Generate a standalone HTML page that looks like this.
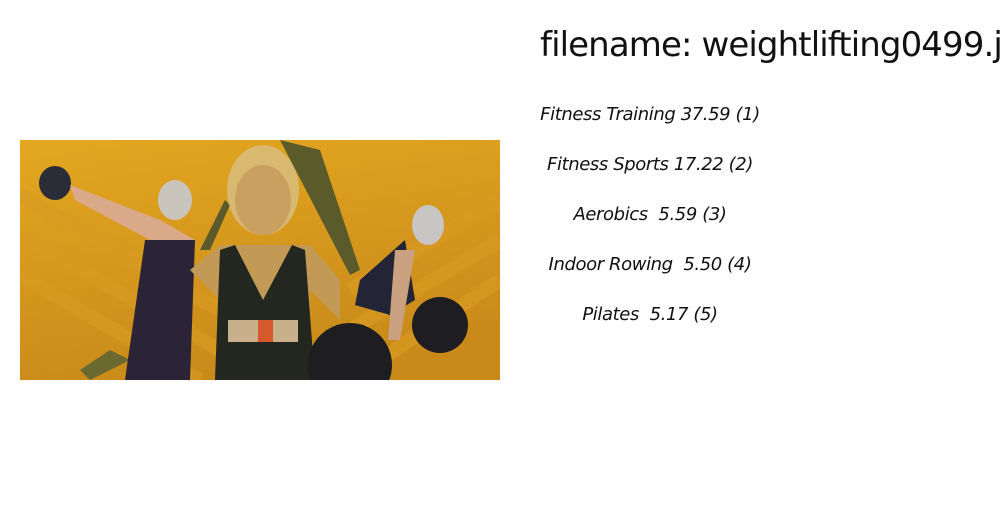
<!DOCTYPE html>
<html><head><meta charset="utf-8"><style>
html,body{margin:0;padding:0;background:#fff;width:1000px;height:520px;overflow:hidden;position:relative}
.t{position:absolute;left:540px;top:25px;width:460px;overflow:hidden;font:34px "DejaVu Sans","Liberation Sans",sans-serif;color:#111;white-space:nowrap;letter-spacing:-0.9px}
.l{position:absolute;width:240px;left:530px;text-align:center;font:italic 18px "DejaVu Sans","Liberation Sans",sans-serif;color:#111;white-space:nowrap;letter-spacing:-0.4px}
</style></head><body>
<svg style="position:absolute;left:20px;top:140px" width="480" height="240" viewBox="0 0 480 240">
<defs><linearGradient id="g" x1="0" y1="0" x2="0.3" y2="1"><stop offset="0" stop-color="#e3a720"/><stop offset="1" stop-color="#c98a1a"/></linearGradient></defs>
<rect width="480" height="240" fill="url(#g)"/>
<g stroke="#d99a22" stroke-width="14" opacity="0.7">
<line x1="0" y1="55" x2="200" y2="170"/><line x1="0" y1="95" x2="200" y2="210"/><line x1="0" y1="135" x2="180" y2="240"/>
<line x1="480" y1="60" x2="330" y2="150"/><line x1="480" y1="100" x2="330" y2="190"/><line x1="480" y1="140" x2="360" y2="220"/>
</g>
<path d="M260 0 L300 10 L340 130 L330 135 Z" fill="#5a5a2a"/>
<path d="M180 110 L205 60 L210 65 L190 110Z" fill="#5a5a2a"/>
<path d="M60 230 L90 210 L110 220 L70 240Z" fill="#6a6a30"/>
<ellipse cx="35" cy="43" rx="16" ry="17" fill="#2a2c38"/>
<path d="M50 45 L140 80 L175 100 L170 115 L130 100 L55 60Z" fill="#d9a98a"/>
<ellipse cx="155" cy="60" rx="17" ry="20" fill="#c9c4bc"/>
<path d="M125 100 L175 100 L170 240 L105 240 Z" fill="#2a2436"/>
<ellipse cx="243" cy="50" rx="36" ry="45" fill="#d9b870"/>
<ellipse cx="243" cy="60" rx="28" ry="35" fill="#caa060"/>
<path d="M170 130 L200 105 L290 105 L320 140 L320 180 L290 150 L290 240 L200 240 L200 160 Z" fill="#c39a55"/>
<path d="M200 110 L215 105 L243 160 L272 105 L285 110 L295 240 L195 240Z" fill="#24271f"/>
<rect x="208" y="180" width="70" height="22" fill="#c7b08a"/>
<rect x="238" y="180" width="15" height="22" fill="#d6592d"/>
<circle cx="330" cy="225" r="42" fill="#1d1d22"/>
<circle cx="420" cy="185" r="28" fill="#1d1d22"/>
<ellipse cx="408" cy="85" rx="16" ry="20" fill="#c8c6c4"/>
<path d="M340 140 L385 100 L395 160 L370 175 L335 165Z" fill="#232536"/>
<path d="M375 110 L395 110 L380 200 L368 200Z" fill="#c9a080"/>
</svg>
<div class="t">filename: weightlifting0499.jpg</div>
<div class="l" style="top:104px">Fitness Training 37.59 (1)</div>
<div class="l" style="top:154px">Fitness Sports 17.22 (2)</div>
<div class="l" style="top:204px">Aerobics&nbsp; 5.59 (3)</div>
<div class="l" style="top:254px">Indoor Rowing&nbsp; 5.50 (4)</div>
<div class="l" style="top:304px">Pilates&nbsp; 5.17 (5)</div>
</body></html>
